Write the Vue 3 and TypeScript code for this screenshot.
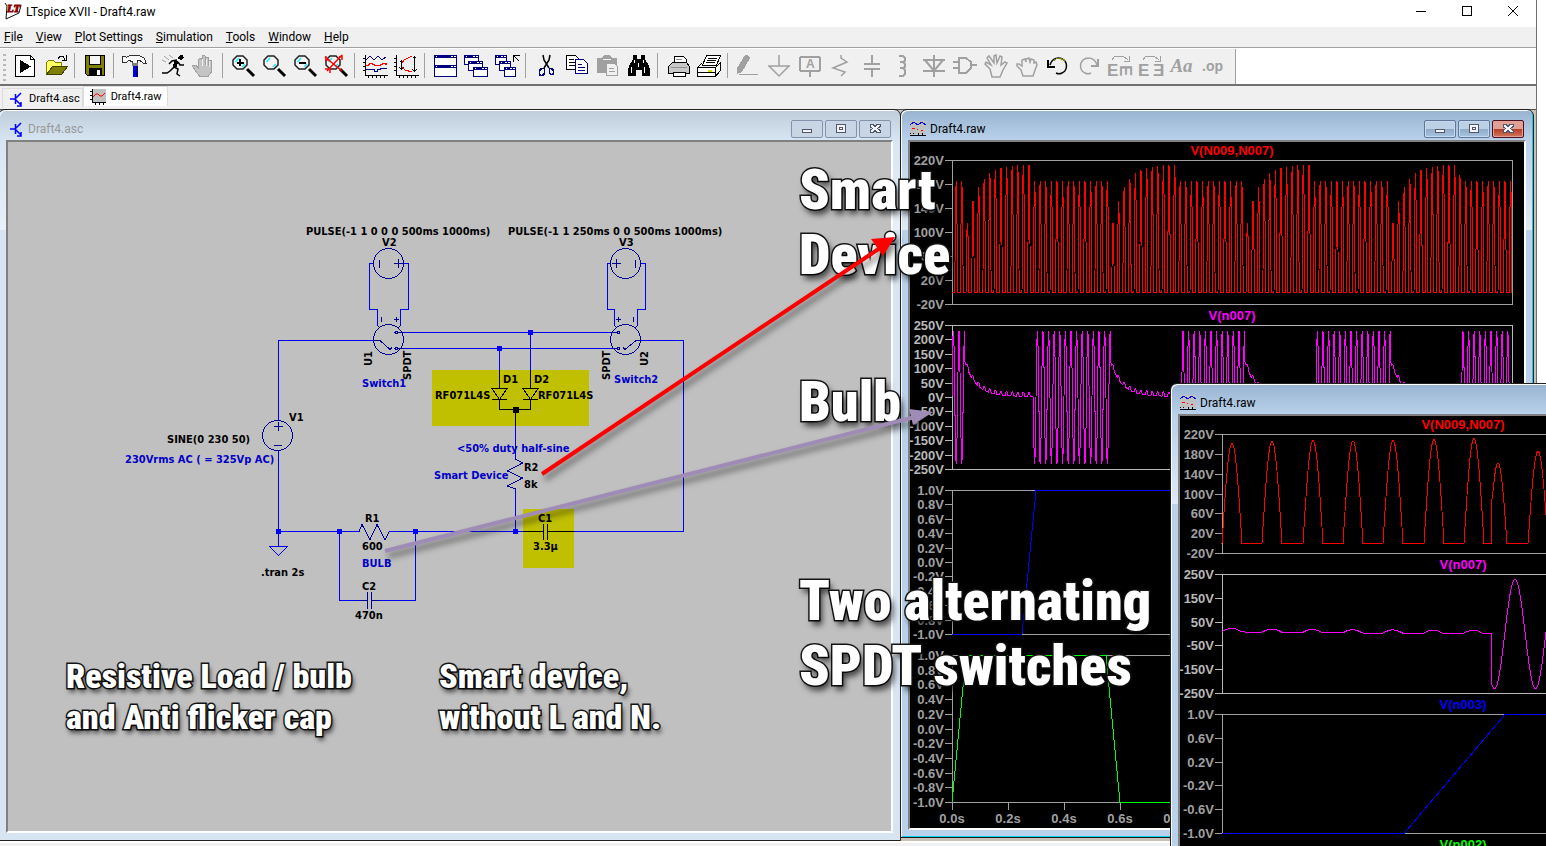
<script setup lang="ts">
interface Shape {
  d?: string
  s?: string
  f?: string
  w?: number
  t?: string
  x?: number
  y?: number
  size?: number
  rot?: string
  smooth?: boolean
}
interface Tool {
  name: string
  shapes: Shape[]
}
interface Trace {
  title: string
  color: string
  axis: string
  top: number
  bottom: number
  max: number
  min: number
  step: number
  digits: number
  d: string
}
interface Label {
  x: number
  y: number
  text: string
  note?: boolean
  up?: boolean
}

const G = '#a0a0a0'
const K = '#000000'
const N = '#000080'

const lens = (inner: Shape[]): Shape[] => [
  { d: 'M16 15l7 7', s: K, w: 3, smooth: true },
  { d: 'M6 2h6l4 4v5l-4 4H6l-4-4V6z', s: '#202020', f: '#f4f4f4', w: 1.5, smooth: true },
  { d: 'M4.500 8l3.500-4M11 13l3-3', s: '#20e8ff', w: 1.5, smooth: true },
  ...inner,
]
const miniWin = (x: number, y: number, w: number, h: number): Shape[] => [
  { d: `M${x}.5 ${y}.5h${w}v${h}h-${w}z`, s: N, f: '#ffffff' },
  { d: `M${x} ${y + 1.5}h${w + 1}`, s: N, w: 3 },
  { d: `M${x + w - 5} ${y + 1.5}h2M${x + w - 2} ${y + 1.5}h2M${x + 2} ${y + 1.5}h1`, s: '#ffffff' },
]

const toolGroups: Tool[][] = [
  [
    { name: 'New', shapes: [
      { d: 'M2.500 1.500h15l4 4v17h-19z', s: K, f: '#ffffff' },
      { d: 'M17.500 1.500v4h4', s: K },
      { d: 'M7 6l11 6.500-11 6.500z', f: K },
    ] },
    { name: 'Open', shapes: [
      { d: 'M2.500 20.500v-12l2-2h5l2 2h6v5', s: '#808000', f: '#ffff66' },
      { d: 'M2.500 20.500l6-8h15l-6 8z', s: '#404000', f: '#808000' },
      { d: 'M14 4.500l2-2h3l2 3M22.500 1v5h-5', s: K },
    ] },
  ],
  [
    { name: 'Save', shapes: [
      { d: 'M2.500 1.500h19v20h-17l-2-2z', s: K, f: '#808000' },
      { d: 'M6.500 1.500h11v9h-11z', s: K, f: '#f4f4f4' },
      { d: 'M6 14h13v8h-13z', f: K },
      { d: 'M14 16h3v5h-3z', f: '#ffffff' },
    ] },
  ],
  [
    { name: 'Control Panel', shapes: [
      { d: 'M.500 2.500h3l1 1 3-2h10l5 3 1.500 5h-2l-4-3h-3v3h-5v-2l-3-1-3 2h-3.500z', s: '#303030', f: '#f8f8f8' },
      { d: 'M10 9h6v3h-6z', f: '#808080' },
      { d: 'M11 12h5v11h-5z', f: '#0000f0' },
      { d: 'M14 12h2v11h-2z', f: '#000070' },
    ] },
  ],
  [
    { name: 'Run', shapes: [
      { d: 'M17 3l2-2h3l1 3-3 2-3-1z', f: K },
      { d: 'M16 6l-5 1-3 3M15 7l-2 6-4 4-3 2H1M13 13l4 2-1 5 3 2M17 8l2 3h4', s: K, w: 1.5, smooth: true },
      { d: 'M13 6l4 1-1 6-4 1z', f: K },
      { d: 'M3 2l5 4M8 1l4 3M1 6l4 2', s: G, smooth: true },
    ] },
    { name: 'Halt', shapes: [
      { d: 'M6.500 14V5.500l1-1.500h1.500l1 1.500V11V2.500l1-1h1.500l1 1V11V4l1-1h1l1 1v8V7l1-1h1l1 1v11l-3 4h-9l-4-5-3-5 1-1h2z', s: '#a0a0a0', f: '#c4c4c4' },
      { d: 'M10 5v7M14 5v7M17.500 7v6', s: '#f0f0f0' },
    ] },
  ],
  [
    { name: 'Zoom In', shapes: lens([{ d: 'M9 5v7M5.500 8.500h7', s: K, w: 2 }]) },
    { name: 'Pan', shapes: lens([]) },
    { name: 'Zoom Out', shapes: lens([{ d: 'M5.500 9h7', s: K, w: 2 }]) },
    { name: 'Zoom Full', shapes: lens([
      { d: 'M1 3l17 14M18 1L3 17M1 15h5v4M2 2v4h4M15 3l3-1v4', s: '#ff0000', w: 1.5, smooth: true },
    ]) },
  ],
  [
    { name: 'Autorange', shapes: [
      { d: 'M2.500 1v20h22M0 4.500h2M0 8.500h2M0 12.500h2M0 16.500h2M5.500 21v3M9.500 21v3M13.500 21v3M17.500 21v3M21.500 21v3', s: K },
      { d: 'M3 6l4-4 4 4 4-4 4 4 4-3', s: N },
      { d: 'M3 11.500h2l2-2h2l3 2h5l3-2h2l2 1', s: '#ff0000', w: 1.5 },
      { d: 'M3 15.500h8v2h3v-2h3v-1h7', s: N },
    ] },
    { name: 'Tile Traces', shapes: [
      { d: 'M2.500 1v20h22M0 4.500h2M0 8.500h2M0 12.500h2M0 16.500h2M5.500 21v3M9.500 21v3M13.500 21v3M17.500 21v3M21.500 21v3', s: K },
      { d: 'M7.500 7v8M5.500 8.500l2-2 2 2M5.500 13.500l2 2 2-2M20.500 2v15M18.500 4.500l2-2 2 2M18.500 15.500l2 2 2-2', s: K },
      { d: 'M18 2l-8 4-2 3M8 13l3 3 7 2', s: '#ff0000' },
    ] },
  ],
  [
    { name: 'Tile Horizontally', shapes: [...miniWin(1, 1, 22, 10), ...miniWin(1, 11, 22, 11)] },
    { name: 'Cascade', shapes: [...miniWin(0, 1, 14, 9), ...miniWin(4, 7, 14, 9), ...miniWin(9, 13, 14, 9)] },
    { name: 'Close All', shapes: [
      ...miniWin(0, 1, 11, 9), ...miniWin(4, 7, 11, 9), ...miniWin(9, 13, 11, 9),
      { d: 'M18.500 8V1.500h6M19 2l5 5', s: K },
    ] },
  ],
  [
    { name: 'Cut', shapes: [
      { d: 'M9 1l1 5 5 8M16 1l-1 5-5 8', s: K, w: 1.5, smooth: true },
      { d: 'M7.500 14.500h3v5l-2 2h-2l-1-1v-4zM15.500 14.500h2l2 2v3l-1 1h-2l-1-2z', s: N, w: 1.5 },
    ] },
    { name: 'Copy', shapes: [
      { d: 'M1.500 1.500h9l3 3v11h-12z', s: K, f: '#ffffff' },
      { d: 'M4 5.500h5M4 8.500h7M4 11.500h7', s: K },
      { d: 'M10.500 5.500h8l4 4v10h-12z', s: N, f: '#ffffff' },
      { d: 'M13 10.500h4M13 13.500h7M13 16.500h7', s: N },
    ] },
    { name: 'Paste', shapes: [
      { d: 'M1 4h5l2-3h6l2 3h5v15H1z', f: G },
      { d: 'M7 5.500h8', s: '#f0f0f0' },
      { d: 'M10.500 9.500h8l3 3v9h-11z', s: G, f: '#f0f0f0' },
      { d: 'M13 14.500h5M13 17.500h6', s: G },
    ] },
    { name: 'Find', shapes: [
      { d: 'M6 1h4v4h4V1h4v4l4 7 1 4v6h-8v-6h-6v6H1v-6l1-4 4-7z', f: K },
      { d: 'M4.500 13v6M17.500 13v6M7.500 6v3M16.500 6v3M11.500 9v4', s: '#ffffff' },
    ] },
  ],
  [
    { name: 'Print Preview', shapes: [
      { d: 'M8.500 9V2.500h9l3 3V9', s: K, f: '#ffffff' },
      { d: 'M2.500 12.500l4-4h14l3 4v7h-21z', s: K, f: '#c8c8c8' },
      { d: 'M7.500 22.500v-4h12v4z', s: K, f: '#ffffff' },
      { d: 'M10 5.500h6M5 13.500h16', s: '#909090' },
    ] },
    { name: 'Print', shapes: [
      { d: 'M5.500 11l4-9.500h14l-4 9.500z', s: K, f: '#ffffff' },
      { d: 'M11 4.500h9M10 6.500h9M9 8.500h9', s: K },
      { d: 'M.500 13.500l4-4M.500 13.500h18v9h-18zM18.500 13.500l5-5v8l-5 6', s: K, f: '#ffffff' },
      { d: 'M1 18.500h17', s: K },
      { d: 'M11 16.500h4', s: '#e0e000', w: 2 },
    ] },
  ],
  [
    { name: 'Wire', shapes: [
      { d: 'M9 1h3l2 3-8 14-5 2v-6z', f: G },
      { d: 'M3 20.500h19', s: G },
    ] },
    { name: 'Ground', shapes: [{ d: 'M12 1v11M1 12h22M2 12l10 10 10-10', s: G, w: 1.5, smooth: true }] },
    { name: 'Label Net', shapes: [
      { d: 'M3 3h18l1 1v12l-1 1H3l-1-1V4zM12 17v6', s: G, w: 2 },
      { t: 'A', x: 8, y: 14, size: 12, f: G },
    ] },
    { name: 'Resistor', shapes: [{ d: 'M12 1v3l6 4-14 6 12 4-4 4', s: G, w: 1.5, smooth: true }] },
    { name: 'Capacitor', shapes: [{ d: 'M12 1v9M12 15v8M4 10h16M4 15h16', s: G, w: 2 }] },
    { name: 'Inductor', shapes: [{ d: 'M8 2h4l2 2v3l-2 1h-3h3l2 2v3l-2 1h-3h3l2 2v4l-2 2H8', s: G, w: 2, smooth: true }] },
    { name: 'Diode', shapes: [{ d: 'M12 1v22M1 6h22M1 17h22M3 6l9 11 9-11', s: G, w: 2, smooth: true }] },
    { name: 'Component', shapes: [{ d: 'M6 4h7l5 4v6l-5 5H6zM0 8h6M0 14h6M18 11h6', s: G, w: 2 }] },
    { name: 'Move', shapes: [{ d: 'M6 15L1 10l1-2 5 3-4-7 2-2 5 7V2l2-1 1 8 3-7 2 1-1 8 4-3 2 1-4 7-3 7H8z', s: G, w: 1.5, smooth: true }] },
    { name: 'Drag', shapes: [{ d: 'M6 16l-4-4v-2h2l3 2V6l3-1 1 3V5l3-1 1 4 1-3 3 1v3l2-1 1 3-2 5-2 6H8z', s: G, w: 1.5, smooth: true }] },
    { name: 'Undo', shapes: [
      { d: 'M4 11c2-7 9-9 14-5 4 4 3 11-2 13-2 1-4 1-6 0', s: K, w: 1.5, smooth: true },
      { d: 'M7 7c4-4 10-3 12 1', s: '#808000' },
      { d: 'M2 6v7h7', s: K, w: 2 },
    ] },
    { name: 'Redo', shapes: [
      { d: 'M20 11c-2-7-9-9-14-5-4 4-3 11 2 13 2 1 4 1 6 0', s: G, w: 1.5, smooth: true },
      { d: 'M21 5v7h-7', s: G, w: 2 },
    ] },
    { name: 'Rotate', shapes: [
      { d: 'M4 6l3-4h8l5 4M21 2v5h-5', s: G },
      { t: 'E', x: -1, y: 22, size: 17, f: G },
      { t: 'E', x: 0, y: 0, size: 17, f: G, rot: 'translate(12 11) rotate(90)' },
    ] },
    { name: 'Mirror', shapes: [
      { d: 'M4 6l3-4h8l5 4M21 2v5h-5', s: G },
      { t: 'E', x: -1, y: 22, size: 17, f: G },
      { t: 'Ǝ', x: 14, y: 22, size: 17, f: G },
    ] },
    { name: 'Text', shapes: [] },
    { name: 'SPICE Directive', shapes: [] },
  ],
]

const menus: string[] = ['File', 'View', 'Plot Settings', 'Simulation', 'Tools', 'Window', 'Help']

/* ---------- schematic ---------- */
const labels: Label[] = [
  { x: 306, y: 235, text: 'PULSE(-1 1 0 0 0 500ms 1000ms)' },
  { x: 508, y: 235, text: 'PULSE(-1 1 250ms 0 0 500ms 1000ms)' },
  { x: 382, y: 246, text: 'V2' },
  { x: 619, y: 246, text: 'V3' },
  { x: 372, y: 366, text: 'U1', up: true },
  { x: 411, y: 380, text: 'SPDT', up: true },
  { x: 610, y: 380, text: 'SPDT', up: true },
  { x: 648, y: 366, text: 'U2', up: true },
  { x: 362, y: 387, text: 'Switch1', note: true },
  { x: 614, y: 383, text: 'Switch2', note: true },
  { x: 503, y: 383, text: 'D1' },
  { x: 534, y: 383, text: 'D2' },
  { x: 435, y: 399, text: 'RF071L4S' },
  { x: 538, y: 399, text: 'RF071L4S' },
  { x: 289, y: 421, text: 'V1' },
  { x: 167, y: 443, text: 'SINE(0 230 50)' },
  { x: 125, y: 463, text: '230Vrms AC ( = 325Vp AC)', note: true },
  { x: 457, y: 452, text: '<50% duty half-sine', note: true },
  { x: 524, y: 471, text: 'R2' },
  { x: 524, y: 488, text: '8k' },
  { x: 434, y: 479, text: 'Smart Device', note: true },
  { x: 365, y: 522, text: 'R1' },
  { x: 362, y: 550, text: '600' },
  { x: 362, y: 567, text: 'BULB', note: true },
  { x: 362, y: 590, text: 'C2' },
  { x: 355, y: 619, text: '470n' },
  { x: 538, y: 522, text: 'C1' },
  { x: 533, y: 550, text: '3.3µ' },
  { x: 261, y: 576, text: '.tran 2s' },
]
const junctions: [number, number][] = [[530, 332], [499, 348], [278, 531], [339, 531], [415, 531], [515, 531]]

/* ---------- waveforms ---------- */
const AXIS = 42

function plot(points: [number, number][]): string {
  return 'M' + points.map(([x, y]) => `${x.toFixed(1)} ${y.toFixed(1)}`).join('L')
}
function scale(v: number, top: number, bottom: number, max: number, min: number): number {
  return top + ((max - v) / (max - min)) * (bottom - top) + 0.5
}

const floating: [number, number][] = [[0.046, 0.29], [0.566, 0.81], [1.046, 1.29], [1.566, 1.815]]
const floatStart = (t: number): number => {
  const seg = floating.find(([a, b]) => t >= a && t < b)
  return seg ? seg[0] : -1
}
function deviceVoltage(t: number): number {
  const half = Math.max(0, -Math.sin(2 * Math.PI * 50 * t))
  const a = floatStart(t)
  return half * (a < 0 ? 185 : 213 - 120 * Math.exp(-(t - a) / 0.042))
}
function bulbVoltage(t: number): number {
  const a = floatStart(t)
  const sine = Math.sin(2 * Math.PI * 50 * t)
  return a < 0 ? 230 * sine : 4 + 120 * Math.exp(-(t - a) / 0.04) + 14 * Math.max(0, -sine)
}
function sweep(fn: (t: number) => number, top: number, bottom: number, max: number, min: number): string {
  const pts: [number, number][] = []
  for (let i = 0; i <= 1600; i++) {
    const t = i / 800
    pts.push([AXIS + t * 280, scale(fn(t), top, bottom, max, min)])
  }
  return plot(pts)
}

const fullTraces: Trace[] = [
  { title: 'V(N009,N007)', color: '#ff0000', axis: '#a0a0a0', top: 18, bottom: 162, max: 220, min: -20, step: 40, digits: 0, d: sweep(deviceVoltage, 18, 162, 220, -20) },
  { title: 'V(n007)', color: '#ff00ff', axis: '#b8b8b8', top: 183, bottom: 327, max: 250, min: -250, step: 50, digits: 0, d: sweep(bulbVoltage, 183, 327, 250, -250) },
  { title: 'V(n003)', color: '#0000ff', axis: '#a0a0a0', top: 348, bottom: 492, max: 1, min: -1, step: 0.2, digits: 1, d: 'M42 492.500H112L126 348.500H266L280 492.500H392' },
  { title: 'V(n002)', color: '#00ff00', axis: '#a0a0a0', top: 513, bottom: 660, max: 1, min: -1, step: 0.2, digits: 1, d: 'M42 660.500L56 513.500H196L210 660.500H322' },
]

function zoomDevice(): string {
  const pts: [number, number][] = []
  const peaks: [number, number][] = [[52, 202], [92, 206], [133, 208], [173, 207], [213, 208], [254, 210], [294, 212]]
  const put = (x: number, v: number) => pts.push([x, scale(v, 18, 137, 220, -20)])
  put(42, 0)
  for (const [c, amp] of peaks) for (let k = -10; k <= 10; k++) put(c + k, amp * Math.max(0, Math.cos((k * Math.PI) / 20)))
  put(311, 0)
  put(311, 75)
  for (let k = -5; k <= 9; k++) put(318 + k, 163 * Math.cos((k * Math.PI) / 18))
  for (let k = -10; k <= 10; k++) put(358 + k, 186 * Math.max(0, Math.cos((k * Math.PI) / 20)))
  return plot(pts)
}
function zoomBulb(): string {
  const pts: [number, number][] = []
  for (let x = 42; x <= 311; x++) {
    const v = 10 * Math.exp(-(x - 42) / 150) + 14 * Math.max(0, Math.cos(((x - 52) * Math.PI) / 20.1))
    pts.push([x, scale(v, 158, 277, 250, -250)])
  }
  for (let x = 311; x <= 524; x++) pts.push([x, scale(230 * Math.cos(((x - 335) * Math.PI) / 20.5), 158, 277, 250, -250)])
  return plot(pts)
}

const zoomTraces: Trace[] = [
  { title: 'V(N009,N007)', color: '#ff0000', axis: '#a0a0a0', top: 18, bottom: 137, max: 220, min: -20, step: 40, digits: 0, d: zoomDevice() },
  { title: 'V(n007)', color: '#ff00ff', axis: '#b8b8b8', top: 158, bottom: 277, max: 250, min: -250, step: 100, digits: 0, d: zoomBulb() },
  { title: 'V(n003)', color: '#0000ff', axis: '#a0a0a0', top: 298, bottom: 417, max: 1, min: -1, step: 0.4, digits: 1, d: 'M42 417.500H224L325 298.500H524' },
  { title: 'V(n002)', color: '#00ff00', axis: '#a0a0a0', top: 438, bottom: 557, max: 1, min: -1, step: 2, digits: 1, d: 'M42 438.500H524' },
]

function ticks(p: Trace): { y: number; text: string }[] {
  const count = Math.round((p.max - p.min) / p.step)
  return Array.from({ length: count + 1 }, (_, i) => {
    const value = (p.max - i * p.step).toFixed(p.digits).replace(/^-(0\.0)$/, '$1')
    return { y: Math.round(p.top + (i * (p.bottom - p.top)) / count), text: `${value}V` }
  })
}
const times = Array.from({ length: 5 }, (_, i) => ({ x: AXIS + i * 56, text: `${(i * 0.2).toFixed(1)}s` }))

const main = { traces: fullTraces, right: 602, times }
const detail = { traces: zoomTraces, right: 524 }
</script>

<template>
  <div class="screen">
    <div class="app">
      <header class="titlebar">
        <svg class="logo" width="20" height="20" viewBox="0 0 20 20" aria-hidden="true">
          <path d="M2 1l2 3-1 13 13-6 2-8" fill="none" stroke="#111" />
          <text x="4" y="10" class="logo-text">LT</text>
        </svg>
        <h1>LTspice XVII - Draft4.raw</h1>
        <div class="sys">
          <button type="button" aria-label="Minimize"><svg width="12" height="12"><path d="M1 6.500h10" /></svg></button>
          <button type="button" aria-label="Maximize"><svg width="12" height="12"><path d="M1.500 1.500h9v9h-9z" /></svg></button>
          <button type="button" aria-label="Close"><svg width="12" height="12"><path d="M1 1l10 10M11 1L1 11" class="soft" /></svg></button>
        </div>
      </header>

      <nav class="menubar">
        <button v-for="m in menus" :key="m" type="button"><u>{{ m[0] }}</u>{{ m.slice(1) }}</button>
      </nav>

      <div class="toolrow">
        <div class="toolbar" role="toolbar">
          <span class="grip"></span>
          <div v-for="(group, gi) in toolGroups" :key="gi" class="group">
            <button v-for="tool in group" :key="tool.name" type="button" :aria-label="tool.name">
              <span v-if="tool.name === 'Text'" class="aa">Aa</span>
              <span v-else-if="tool.name === 'SPICE Directive'" class="op">.op</span>
              <svg v-else width="24" height="24" viewBox="0 0 24 24">
                <template v-for="(p, i) in tool.shapes" :key="i">
                  <path v-if="p.d" :d="p.d" :stroke="p.s || 'none'" :fill="p.f || 'none'" :stroke-width="p.w || 1" :class="{ soft: p.smooth }" />
                  <text v-else :x="p.x" :y="p.y" :fill="p.f" :font-size="p.size" :transform="p.rot">{{ p.t }}</text>
                </template>
              </svg>
            </button>
          </div>
        </div>
      </div>

      <div class="tabs" role="tablist">
        <button type="button" role="tab" class="tab">
          <svg width="14" height="16" viewBox="0 0 14 16"><path d="M0 8h5M5.500 3v10M6 7l5-5M6 9l5 5M11 11v4H7" class="npn" /></svg>Draft4.asc
        </button>
        <button type="button" role="tab" class="tab on" aria-selected="true">
          <svg width="16" height="16" viewBox="0 0 16 16"><path d="M2 0h14v13H2z" fill="#c0c0c0" /><path d="M2.500 0v13.500H16M0 2.500h2M0 6.500h2M0 10.500h2M5.500 14v2M9.500 14v2M13.500 14v2" fill="none" stroke="#000" /><path d="M3 8l3-3h2l2 2h2l3-3" fill="none" stroke="#f00" class="soft" /></svg>Draft4.raw
        </button>
      </div>

      <main class="desktop">
        <section class="win sheet">
          <header class="caption">
            <svg width="14" height="16" viewBox="0 0 14 16"><path d="M0 8h5M5.500 3v10M6 7l5-5M6 9l5 5M11 11v4H7" class="npn" /></svg>
            <h2>Draft4.asc</h2>
            <button type="button" aria-label="Minimize"><svg width="12" height="12"><path d="M1.500 6.500h9v3h-9z" /></svg></button>
            <button type="button" aria-label="Maximize"><svg width="12" height="12"><path d="M1.500 1.500h9v8h-9zM4.500 4.500h3v2h-3z" /></svg></button>
            <button type="button" aria-label="Close"><svg width="12" height="12"><path d="M1 1.500h3l2 2 2-2h3v2l-2.500 2 2.500 2v2h-3l-2-2-2 2h-3v-2l2.500-2-2.500-2z" /></svg></button>
          </header>
          <div class="client">
            <svg class="fill" aria-label="Schematic">
              <g transform="translate(-8 -142)">
                <path class="mark" d="M432 370h157v56h-157zM523 509h51v59h-51z" />
                <path class="wire" d="M373 263.500H369.500V309.500H377.500V325M404 263.500H408.500V309.500H400.500V325M610 263.500H607.500V309.500H614.500V325M641 263.500H645.500V309.500H637.500V325M403 332.500H611M403 348.500H611M374 340.500H278.500V420M278.500 451V546M640 340.500H683.500V531.500H574M499.500 348V370M530.500 332V370M515.500 426V459M515.500 489V531.500M278 531.500H359M389 531.500H523M339.500 531V600.500H360M415.500 531V600.500H380" />
                <path class="wire" d="M269.500 546.500h18l-9 9z" />
                <g class="part">
                  <circle cx="388.500" cy="263.500" r="15" />
                  <circle cx="625.500" cy="263.500" r="15" />
                  <circle cx="388.500" cy="339.500" r="15" />
                  <circle cx="625.500" cy="339.500" r="15" />
                  <circle cx="277.500" cy="435.500" r="15" />
                  <circle cx="396.500" cy="332.500" r="1.500" /><circle cx="396.500" cy="348.500" r="1.500" />
                  <circle cx="618.500" cy="332.500" r="1.500" /><circle cx="618.500" cy="348.500" r="1.500" />
                  <path d="M379.500 260v8M394 263.500h9M398.500 259v9M612 263.500h9M616.500 259v9M635.500 260v8" />
                  <path d="M381.500 317v5M394 319.500h5M396.500 317v5M616 319.500h5M618.500 317v5M633.500 317v5" />
                  <path d="M398 332.500h6M398 348.500h6M611 332.500h6M611 348.500h6M374 340.500h6l10 9 2-2M640 340.500h-4l-11 9-2-2" />
                  <path d="M377.500 325l2 3M400.500 325l-2 3M614.500 325l2 3M637.500 325l-2 3" />
                  <path d="M274 426.500h9M278.500 422v9M274 445.500h8" />
                  <path d="M515.500 458v1l7 4-15 8 15 7-15 8 8 3M359 531.500l3-7 8 15 7-15 8 15 4-7" />
                  <path d="M360 600.500h7.500M372 600.500h8M367.500 592v17M371.500 592v17" />
                </g>
                <g class="ink">
                  <path d="M499.500 370v18M530.500 370v18M492 388.500h15l-7.500 11zM523 388.500h15l-7.500 11zM492 399.500h15M523 399.500h15M499.500 399v10.500h31v-10.500M515.500 409v17" />
                  <path d="M523 531.500h20.500M547.500 531.500H574M543.500 524v16M547.500 524v16" />
                  <rect x="513" y="407" width="5" height="5" />
                </g>
                <rect v-for="([x, y], i) in junctions" :key="i" class="dot" :x="x - 2" :y="y - 2" width="5" height="5" />
                <text v-for="(l, i) in labels" :key="i" :class="{ note: l.note }" :transform="`translate(${l.x} ${l.y})${l.up ? ' rotate(-90)' : ''}`">{{ l.text }}</text>
              </g>
            </svg>
          </div>
        </section>

        <section class="win active waves">
          <header class="caption">
            <svg width="16" height="16" viewBox="0 0 16 16"><path d="M0 0h16v13H0z" fill="#c0c0c0" /><path d="M0 4l4-3 4 3 4-3 4 3" fill="none" stroke="#00f" /><path d="M2 7.500h3M7 8.500h1M11 9.500h2" fill="none" stroke="#f00" /><path d="M0 14.500h16M3.500 12v1M8.500 12v3M12.500 12v3M0 12.500h1" fill="none" stroke="#000" /></svg>
            <h2>Draft4.raw</h2>
            <button type="button" aria-label="Minimize"><svg width="12" height="12"><path d="M1.500 6.500h9v3h-9z" /></svg></button>
            <button type="button" aria-label="Maximize"><svg width="12" height="12"><path d="M1.500 1.500h9v8h-9zM4.500 4.500h3v2h-3z" /></svg></button>
            <button type="button" class="close" aria-label="Close"><svg width="12" height="12"><path d="M1 1.500h3l2 2 2-2h3v2l-2.500 2 2.500 2v2h-3l-2-2-2 2h-3v-2l2.500-2-2.500-2z" /></svg></button>
          </header>
          <div class="client">
            <svg class="fill scope" aria-label="Waveforms">
              <g v-for="p in main.traces" :key="p.title">
                <path :d="`M42.500 ${p.top}.5H${main.right}.5V${p.bottom}.5H42.500z`" :stroke="p.axis" />
                <g v-for="t in ticks(p)" :key="t.text">
                  <path :d="`M35 ${t.y}.5h7`" :stroke="p.axis" />
                  <text x="34" :y="t.y + 5" :fill="p.axis" text-anchor="end">{{ t.text }}</text>
                </g>
                <path :d="p.d" :stroke="p.color" />
                <text :x="(AXIS + main.right) / 2" :y="p.top - 5" :fill="p.color" text-anchor="middle">{{ p.title }}</text>
              </g>
              <g v-for="t in main.times" :key="t.text">
                <path :d="`M${t.x}.5 661v7`" stroke="#a0a0a0" />
                <text :x="t.x" y="681" fill="#a0a0a0" text-anchor="middle">{{ t.text }}</text>
              </g>
            </svg>
          </div>
        </section>
      </main>
      <footer class="status"></footer>
    </div>

    <section class="win active detail">
      <header class="caption">
        <svg width="16" height="16" viewBox="0 0 16 16"><path d="M0 0h16v13H0z" fill="#c0c0c0" /><path d="M0 4l4-3 4 3 4-3 4 3" fill="none" stroke="#00f" /><path d="M2 7.500h3M7 8.500h1M11 9.500h2" fill="none" stroke="#f00" /><path d="M0 14.500h16M3.500 12v1M8.500 12v3M12.500 12v3M0 12.500h1" fill="none" stroke="#000" /></svg>
        <h2>Draft4.raw</h2>
      </header>
      <div class="client">
        <svg class="fill scope" aria-label="Waveform detail">
          <g v-for="p in detail.traces" :key="p.title">
            <path :d="`M42.500 ${p.top}.5H${detail.right}.5V${p.bottom}.5H42.500z`" :stroke="p.axis" />
            <g v-for="t in ticks(p)" :key="t.text">
              <path :d="`M35 ${t.y}.5h7`" :stroke="p.axis" />
              <text x="34" :y="t.y + 5" :fill="p.axis" text-anchor="end">{{ t.text }}</text>
            </g>
            <path :d="p.d" :stroke="p.color" />
            <text :x="(AXIS + detail.right) / 2" :y="p.top - 5" :fill="p.color" text-anchor="middle">{{ p.title }}</text>
          </g>
        </svg>
      </div>
    </section>

    <div class="notes">
      <p class="big n1">Smart<br />Device</p>
      <p class="big n2">Bulb</p>
      <p class="big n3">Two alternating<br />SPDT switches</p>
      <p class="small n4">Resistive Load / bulb<br />and Anti flicker cap</p>
      <p class="small n5">Smart device,<br />without L and N.</p>
      <svg class="arrows" aria-hidden="true">
        <path d="M542 474L880 248" stroke="#ff0000" stroke-width="4" fill="none" />
        <path d="M895 237l-12 19-12-17z" fill="#ff0000" />
        <path d="M385 551L915 417" stroke="#9e8bb6" stroke-width="4" fill="none" />
        <path d="M933 412l-20 13-4-16z" fill="#9e8bb6" />
      </svg>
    </div>
  </div>
</template>

<style>
html,
body {
  margin: 0;
  background: #ffffff;
}
</style>

<style scoped>
* {
  box-sizing: border-box;
}
.screen {
  position: relative;
  height: 100vh;
  overflow: hidden;
  background: #fff;
  color: #000;
  font-family: Roboto, "Open Sans", sans-serif;
  font-size: 12px;
}
button {
  margin: 0;
  padding: 0;
  border: 0;
  background: none;
  font: inherit;
  color: inherit;
}
h1,
h2,
p {
  margin: 0;
  font-size: 12px;
  font-weight: 400;
}
svg {
  display: block;
  shape-rendering: crispEdges;
}
.soft {
  shape-rendering: auto;
}
.app {
  display: flex;
  flex-direction: column;
  height: 100%;
  margin-right: 9px;
  border-right: 1px solid #707070;
}
.titlebar {
  display: flex;
  align-items: flex-start;
  height: 27px;
  padding-left: 3px;
}
.logo {
  margin: 2px 3px 0 0;
  shape-rendering: auto;
}
.logo-text {
  font: italic 700 11px "Liberation Serif", serif;
  fill: #8b0000;
  stroke: #8b0000;
}
.titlebar h1 {
  flex: 1;
  line-height: 24px;
}
.sys {
  display: flex;
}
.sys button {
  display: grid;
  place-items: center;
  width: 46px;
  height: 22px;
}
.sys path {
  fill: none;
  stroke: #000;
}
.menubar {
  display: flex;
  gap: 13px;
  height: 21px;
  padding-left: 4px;
  border-bottom: 1px solid #a0a0a0;
  background: #f0f0f0;
}
.menubar button {
  line-height: 20px;
}
.toolrow {
  height: 38px;
  border-top: 1px solid #fff;
  border-bottom: 2px solid #707070;
}
.toolbar {
  display: flex;
  width: max-content;
  height: 35px;
  padding-right: 7px;
  border-right: 1px solid #a0a0a0;
  background: #f0f0f0;
}
.grip {
  width: 3px;
  margin: 5px 3px 3px;
  background: repeating-linear-gradient(#b8b8b8 0 2px, #f0f0f0 2px 5px);
}
.group {
  display: flex;
}
.group + .group {
  position: relative;
  padding-left: 8px;
}
.group + .group::before {
  content: "";
  position: absolute;
  left: 3px;
  top: 4px;
  width: 1px;
  height: 25px;
  background: #a0a0a0;
}
.group button {
  display: grid;
  place-items: center;
  width: 31px;
  height: 34px;
}
.group svg {
  overflow: visible;
}
.group text {
  font-family: "Liberation Sans", sans-serif;
  font-weight: 700;
}
.aa {
  color: #a0a0a0;
  font: italic 700 19px/24px "Liberation Serif", serif;
}
.op {
  color: #a0a0a0;
  font: 700 14px/24px "Liberation Sans", sans-serif;
}
.tabs {
  display: flex;
  align-items: flex-start;
  height: 23px;
  padding-left: 2px;
  background: #f0f0f0;
}
.tab {
  display: flex;
  align-items: center;
  gap: 5px;
  height: 20px;
  margin-top: 2px;
  padding: 0 2px 0 7px;
  border: 1px solid #dcdcdc;
  border-bottom: 0;
  font-size: 11px;
}
.tab.on {
  margin-top: 0;
  padding: 0 5px 0 6px;
  background: #fff;
}
.npn {
  fill: none;
  stroke: #0000ff;
  stroke-width: 1.5;
  shape-rendering: auto;
}
.desktop {
  position: relative;
  flex: 1;
  border-top: 1px solid #505050;
  background: #c8c0b4;
}
.status {
  height: 5px;
  border-top: 2px solid #fff;
  background: #f0f0f0;
}
.win {
  position: absolute;
  display: flex;
  flex-direction: column;
  padding: 0 7px 7px;
  border: 1px solid #202020;
  border-radius: 7px 7px 0 0;
  box-shadow: inset 1px 1px #fff;
  background: linear-gradient(#bfcddb, #d7e4f2 30px, #e8f0f8 120px, #d7e4f2 120px);
}
.active {
  background: linear-gradient(#98b3d1, #b9d1ea 30px, #dfe9f6 120px, #b9d1ea 120px);
}
.sheet {
  top: -1px;
  bottom: 0;
  left: -2px;
  width: 903px;
}
.waves {
  top: -1px;
  bottom: 3px;
  left: 900px;
  right: 2px;
  box-shadow: inset 1px 1px #fff, inset -1px -1px #00d0f0;
}
.detail {
  top: 383px;
  left: 1170px;
  right: -170px;
  bottom: -160px;
}
.caption {
  display: flex;
  align-items: center;
  gap: 2px;
  height: 30px;
  padding: 7px 2px 0;
}
.caption h2 {
  flex: 1;
  padding-left: 2px;
  line-height: 20px;
}
.sheet .caption {
  padding-left: 4px;
}
.sheet h2 {
  color: #999;
}
.caption button {
  display: grid;
  place-items: center;
  width: 32px;
  height: 18px;
  border: 1px solid #8492ad;
  border-radius: 2px;
  background: #c7d5e4;
}
.caption button path {
  fill: #f4f4f8;
  stroke: #50566c;
}
.active button {
  border-color: #5f7798;
  box-shadow: inset 0 0 0 1px #c5d8ed;
  background: linear-gradient(#bcd0e6 50%, #8faac6 50%, #a9c4e0);
}
.active .close {
  border-color: #4a1020;
  box-shadow: inset 0 0 0 1px #e0a095;
  background: linear-gradient(#e0a095 50%, #b83a22 50%, #d07860);
}
.client {
  flex: 1;
  min-height: 0;
  border: 2px solid;
  border-color: #808080 #fff #fff #808080;
  background: #c0c0c0;
}
.fill {
  width: 100%;
  height: 100%;
}
.sheet .client text {
  font: 700 11px "DejaVu Sans Condensed", "DejaVu Sans", sans-serif;
  fill: #000;
}
.sheet .client .note {
  fill: #0000c8;
}
.mark {
  fill: #c0c000;
}
.wire {
  fill: none;
  stroke: #0000f0;
}
.part {
  fill: none;
  stroke: #000090;
}
.ink {
  fill: none;
  stroke: #000;
}
.ink rect {
  fill: #000;
}
.dot {
  fill: #0000ff;
}
.active .client {
  background: #000;
}
.scope path {
  fill: none;
}
.scope text {
  font: 700 13px "Liberation Sans", sans-serif;
}
.notes {
  position: absolute;
  inset: 0;
  pointer-events: none;
}
.notes p {
  position: absolute;
  color: #fff;
  font-family: "Roboto Condensed", "Liberation Sans Narrow", "DejaVu Sans Condensed", sans-serif;
  font-weight: 900;
  white-space: nowrap;
  paint-order: stroke fill;
}
.notes .big {
  font-size: 56px;
  line-height: 65px;
  -webkit-text-stroke: 3px #151515;
  text-shadow: 3px 5px 6px rgba(0, 0, 0, 0.7);
}
.notes .small {
  font-size: 34px;
  line-height: 41px;
  -webkit-text-stroke: 3px #151515;
  text-shadow: 2px 4px 5px rgba(0, 0, 0, 0.7);
}
.n1 {
  left: 799px;
  top: 158px;
}
.n2 {
  left: 799px;
  top: 370px;
}
.n3 {
  left: 799px;
  top: 569px;
}
.n4 {
  left: 66px;
  top: 656px;
}
.n5 {
  left: 439px;
  top: 656px;
}
.arrows {
  position: absolute;
  inset: 0;
  width: 100%;
  height: 100%;
  shape-rendering: auto;
  filter: drop-shadow(3px 5px 3px rgba(0, 0, 0, 0.5));
}
</style>
